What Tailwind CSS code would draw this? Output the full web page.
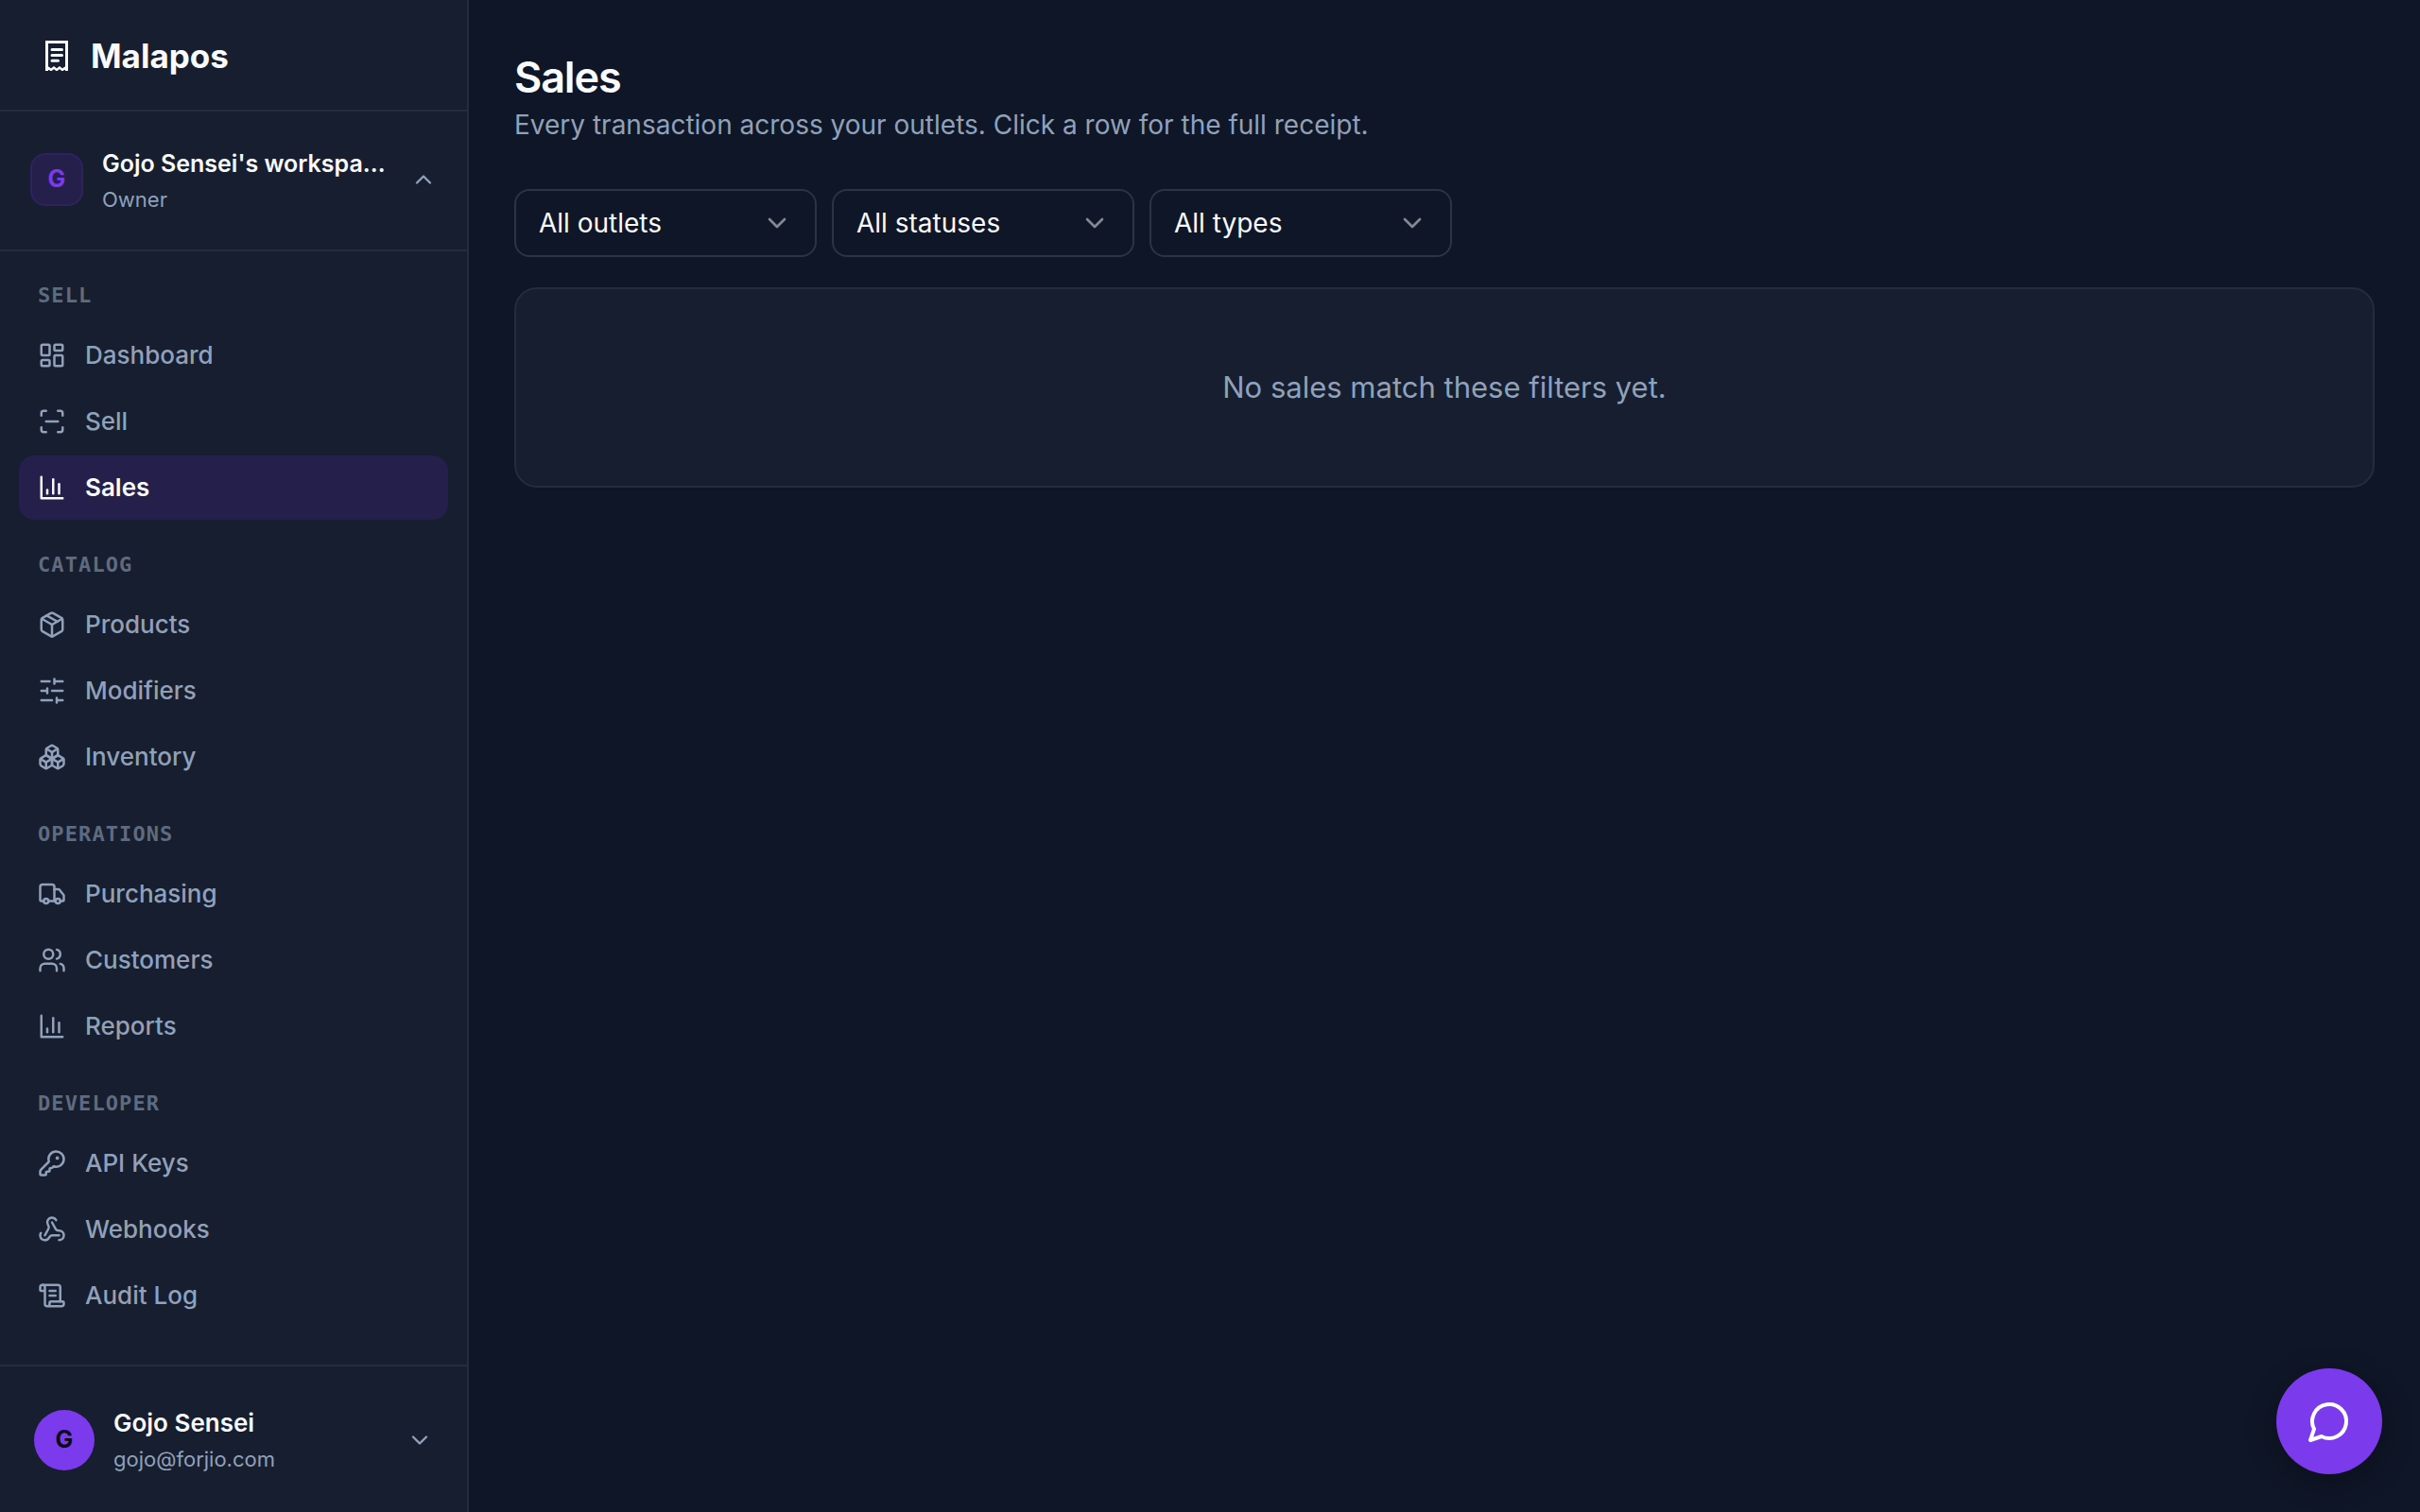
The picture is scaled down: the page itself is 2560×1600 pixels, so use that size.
<!DOCTYPE html>
<html lang="en">
<head>
    <meta charset="UTF-8">
    <meta name="viewport" content="width=device-width, initial-scale=1.0">
    <title>Sales - Malapos</title>
    <script src="https://cdn.jsdelivr.net/npm/@tailwindcss/browser@4"></script>
</head>
<body class="bg-[#0f1627] text-slate-50 font-['Inter','Liberation_Sans',sans-serif]">
    <div class="flex min-h-screen">

        <!-- Sidebar -->
        <aside class="flex flex-col w-[496px] h-screen sticky top-0 shrink-0 bg-[#161e30] border-r-2 border-[#232d3c]">
            <a href="#" class="flex items-center gap-6 h-[118px] shrink-0 pl-12 pt-0.5 border-b-2 border-[#232d3c]">
                <svg class="w-6 h-8" viewBox="0 0 24 32" fill="none" stroke="currentColor" stroke-width="3">
                    <path d="M1.5 32V1.5h21V32"/>
                    <path d="M1.5 30.5l2-1.5 2.5 2 3-2.5 3 2.5 3-2.5 3 2.5 2.5-2 2 1.5" stroke-width="2.4"/>
                    <path d="M7 9.5h10.500M7 15.500h10.500M7 21.200h6.500" stroke-linecap="round"/>
                </svg>
                <span class="text-[35px] leading-[44px] font-bold">Malapos</span>
            </a>

            <button type="button" title="Gojo Sensei's workspace" class="flex items-center gap-5 h-[148px] shrink-0 px-8 pb-0.5 text-left border-b-2 border-[#232d3c]">
                <span class="flex items-center justify-center w-14 h-14 shrink-0 rounded-2xl bg-[#24204b] border-2 border-[#2e225f] text-[#7c3aed] text-[25px] font-bold">G</span>
                <span class="flex-1 min-w-0 pt-0.5">
                    <span class="block truncate text-[25px] leading-10 font-semibold">Gojo Sensei's workspa…</span>
                    <span class="block text-[22px] leading-9 text-slate-400">Owner</span>
                </span>
                <svg class="w-7 h-7 shrink-0 text-slate-400" viewBox="0 0 24 24" fill="none" stroke="currentColor" stroke-width="2" stroke-linecap="round" stroke-linejoin="round"><path d="m18 15-6-6-6 6"/></svg>
            </button>

            <nav class="flex flex-col gap-[25px] flex-1 min-h-0 overflow-hidden px-5 pt-6 text-[26px] leading-8 font-medium text-slate-400">
                <div>
                    <h2 class="px-5 pt-3 pb-[18px] text-[22px] leading-[22px] font-bold tracking-wider text-[#5f6b7e] font-['DejaVu_Sans_Mono',monospace]">SELL</h2>
                    <div class="flex flex-col gap-0.5">
                        <a href="#" class="flex items-center gap-5 h-[68px] px-5 rounded-2xl">
                            <svg class="w-[30px] h-[30px]" viewBox="0 0 24 24" fill="none" stroke="currentColor" stroke-width="2" stroke-linecap="round" stroke-linejoin="round"><rect width="7" height="9" x="3" y="3" rx="1"/><rect width="7" height="5" x="14" y="3" rx="1"/><rect width="7" height="9" x="14" y="12" rx="1"/><rect width="7" height="5" x="3" y="16" rx="1"/></svg>
                            Dashboard
                        </a>
                        <a href="#" class="flex items-center gap-5 h-[68px] px-5 rounded-2xl">
                            <svg class="w-[30px] h-[30px]" viewBox="0 0 24 24" fill="none" stroke="currentColor" stroke-width="2" stroke-linecap="round" stroke-linejoin="round"><path d="M3 7V5a2 2 0 0 1 2-2h2"/><path d="M17 3h2a2 2 0 0 1 2 2v2"/><path d="M21 17v2a2 2 0 0 1-2 2h-2"/><path d="M7 21H5a2 2 0 0 1-2-2v-2"/><path d="M7 12h10"/></svg>
                            Sell
                        </a>
                        <a href="#" aria-current="page" class="flex items-center gap-5 h-[68px] px-5 rounded-2xl bg-[#24204b] text-slate-50 font-semibold">
                            <svg class="w-[30px] h-[30px]" viewBox="0 0 24 24" fill="none" stroke="currentColor" stroke-width="2" stroke-linecap="round" stroke-linejoin="round"><path d="M3 3v18h18"/><path d="M18 17V9"/><path d="M13 17V5"/><path d="M8 17v-3"/></svg>
                            Sales
                        </a>
                    </div>
                </div>

                <div>
                    <h2 class="px-5 pt-3 pb-[18px] text-[22px] leading-[22px] font-bold tracking-wider text-[#5f6b7e] font-['DejaVu_Sans_Mono',monospace]">CATALOG</h2>
                    <div class="flex flex-col gap-0.5">
                        <a href="#" class="flex items-center gap-5 h-[68px] px-5 rounded-2xl">
                            <svg class="w-[30px] h-[30px]" viewBox="0 0 24 24" fill="none" stroke="currentColor" stroke-width="2" stroke-linecap="round" stroke-linejoin="round"><path d="m7.5 4.27 9 5.15"/><path d="M21 8a2 2 0 0 0-1-1.730l-7-4a2 2 0 0 0-2 0l-7 4A2 2 0 0 0 3 8v8a2 2 0 0 0 1 1.730l7 4a2 2 0 0 0 2 0l7-4A2 2 0 0 0 21 16Z"/><path d="m3.300 7 8.700 5 8.700-5"/><path d="M12 22V12"/></svg>
                            Products
                        </a>
                        <a href="#" class="flex items-center gap-5 h-[68px] px-5 rounded-2xl">
                            <svg class="w-[30px] h-[30px]" viewBox="0 0 24 24" fill="none" stroke="currentColor" stroke-width="2" stroke-linecap="round" stroke-linejoin="round"><path d="M21 4h-7M10 4H3M21 12h-9M8 12H3M21 20h-5M12 20H3M14 2v4M8 10v4M16 18v4"/></svg>
                            Modifiers
                        </a>
                        <a href="#" class="flex items-center gap-5 h-[68px] px-5 rounded-2xl">
                            <svg class="w-[30px] h-[30px]" viewBox="0 0 24 24" fill="none" stroke="currentColor" stroke-width="2" stroke-linecap="round" stroke-linejoin="round"><path d="M2.970 12.920A2 2 0 0 0 2 14.630v3.240a2 2 0 0 0 .970 1.710l3 1.800a2 2 0 0 0 2.060 0L12 19v-5.500l-5-3-4.030 2.420Z"/><path d="m7 16.500-4.740-2.850"/><path d="m7 16.500 5-3"/><path d="M7 16.500v5.170"/><path d="M12 13.500V19l3.970 2.380a2 2 0 0 0 2.060 0l3-1.800a2 2 0 0 0 .970-1.710v-3.240a2 2 0 0 0-.970-1.710L17 10.500l-5 3Z"/><path d="m17 16.500-5-3"/><path d="m17 16.500 4.740-2.850"/><path d="M17 16.500v5.170"/><path d="M7.970 4.420A2 2 0 0 0 7 6.130v4.370l5 3 5-3V6.130a2 2 0 0 0-.970-1.710l-3-1.800a2 2 0 0 0-2.060 0l-3 1.800Z"/><path d="M12 8 7.260 5.150"/><path d="m12 8 4.740-2.850"/><path d="M12 13.500V8"/></svg>
                            Inventory
                        </a>
                    </div>
                </div>

                <div>
                    <h2 class="px-5 pt-3 pb-[18px] text-[22px] leading-[22px] font-bold tracking-wider text-[#5f6b7e] font-['DejaVu_Sans_Mono',monospace]">OPERATIONS</h2>
                    <div class="flex flex-col gap-0.5">
                        <a href="#" class="flex items-center gap-5 h-[68px] px-5 rounded-2xl">
                            <svg class="w-[30px] h-[30px]" viewBox="0 0 24 24" fill="none" stroke="currentColor" stroke-width="2" stroke-linecap="round" stroke-linejoin="round"><path d="M14 18V6a2 2 0 0 0-2-2H4a2 2 0 0 0-2 2v11a1 1 0 0 0 1 1h2"/><path d="M15 18H9"/><path d="M19 18h2a1 1 0 0 0 1-1v-3.650a1 1 0 0 0-.220-.624l-3.480-4.350A1 1 0 0 0 17.520 8H14"/><circle cx="17" cy="18" r="2"/><circle cx="7" cy="18" r="2"/></svg>
                            Purchasing
                        </a>
                        <a href="#" class="flex items-center gap-5 h-[68px] px-5 rounded-2xl">
                            <svg class="w-[30px] h-[30px]" viewBox="0 0 24 24" fill="none" stroke="currentColor" stroke-width="2" stroke-linecap="round" stroke-linejoin="round"><path d="M16 21v-2a4 4 0 0 0-4-4H6a4 4 0 0 0-4 4v2"/><circle cx="9" cy="7" r="4"/><path d="M22 21v-2a4 4 0 0 0-3-3.870"/><path d="M16 3.130a4 4 0 0 1 0 7.750"/></svg>
                            Customers
                        </a>
                        <a href="#" class="flex items-center gap-5 h-[68px] px-5 rounded-2xl">
                            <svg class="w-[30px] h-[30px]" viewBox="0 0 24 24" fill="none" stroke="currentColor" stroke-width="2" stroke-linecap="round" stroke-linejoin="round"><path d="M3 3v18h18"/><path d="M18 17V9"/><path d="M13 17V5"/><path d="M8 17v-3"/></svg>
                            Reports
                        </a>
                    </div>
                </div>

                <div>
                    <h2 class="px-5 pt-3 pb-[18px] text-[22px] leading-[22px] font-bold tracking-wider text-[#5f6b7e] font-['DejaVu_Sans_Mono',monospace]">DEVELOPER</h2>
                    <div class="flex flex-col gap-0.5">
                        <a href="#" class="flex items-center gap-5 h-[68px] px-5 rounded-2xl">
                            <svg class="w-[30px] h-[30px]" viewBox="0 0 24 24" fill="none" stroke="currentColor" stroke-width="2" stroke-linecap="round" stroke-linejoin="round"><path d="M2.586 17.414A2 2 0 0 0 2 18.828V21a1 1 0 0 0 1 1h3a1 1 0 0 0 1-1v-1a1 1 0 0 1 1-1h1a1 1 0 0 0 1-1v-1a1 1 0 0 1 1-1h.172a2 2 0 0 0 1.414-.586l.814-.814a6.500 6.500 0 1 0-4-4z"/><circle cx="16.500" cy="7.500" r=".5" fill="currentColor"/></svg>
                            API Keys
                        </a>
                        <a href="#" class="flex items-center gap-5 h-[68px] px-5 rounded-2xl">
                            <svg class="w-[30px] h-[30px]" viewBox="0 0 24 24" fill="none" stroke="currentColor" stroke-width="2" stroke-linecap="round" stroke-linejoin="round"><path d="M18 16.980h-5.990c-1.100 0-1.950.940-2.480 1.900A4 4 0 0 1 2 17c.010-.700.200-1.400.570-2"/><path d="m6 17 3.130-5.780c.530-.970.100-2.180-.500-3.100a4 4 0 1 1 6.890-4.060"/><path d="m12 6 3.130 5.730C15.660 12.700 16.900 13 18 13a4 4 0 0 1 0 8"/></svg>
                            Webhooks
                        </a>
                        <a href="#" class="flex items-center gap-5 h-[68px] px-5 rounded-2xl">
                            <svg class="w-[30px] h-[30px]" viewBox="0 0 24 24" fill="none" stroke="currentColor" stroke-width="2" stroke-linecap="round" stroke-linejoin="round"><path d="M15 12h-5"/><path d="M15 8h-5"/><path d="M19 17V5a2 2 0 0 0-2-2H4"/><path d="M8 21h12a2 2 0 0 0 2-2v-1a1 1 0 0 0-1-1H11a1 1 0 0 0-1 1v1a2 2 0 1 1-4 0V5a2 2 0 1 0-4 0v2a1 1 0 0 0 1 1h3"/></svg>
                            Audit Log
                        </a>
                    </div>
                </div>
            </nav>

            <button type="button" class="flex items-center gap-5 h-[156px] shrink-0 px-9 pt-0.5 text-left border-t-2 border-[#232d3c]">
                <span class="flex items-center justify-center w-16 h-16 shrink-0 rounded-full bg-[#7c3aed] text-[#0a0a14] text-[25px] font-bold">G</span>
                <span class="flex-1 min-w-0">
                    <span class="block truncate text-[26px] leading-10 font-semibold">Gojo Sensei</span>
                    <span class="block truncate text-[22px] leading-9 text-slate-400">gojo@forjio.com</span>
                </span>
                <svg class="w-7 h-7 shrink-0 text-slate-400" viewBox="0 0 24 24" fill="none" stroke="currentColor" stroke-width="2" stroke-linecap="round" stroke-linejoin="round"><path d="m6 9 6 6 6-6"/></svg>
            </button>
        </aside>

        <!-- Content -->
        <main class="flex-1 min-w-0 px-12 pt-[52px]">
            <h1 class="text-[45px] leading-[60px] font-semibold tracking-tight">Sales</h1>
            <p class="text-[28px] leading-10 text-slate-400">Every transaction across your outlets. Click a row for the full receipt.</p>

            <div class="flex flex-wrap gap-4 mt-12">
                <div class="relative w-80">
                    <select aria-label="Outlet" class="appearance-none w-full h-[72px] pl-6 pr-16 rounded-2xl border-2 border-[#2a3444] bg-[#0f1627] text-[28px]">
                        <option>All outlets</option>
                    </select>
                    <svg class="absolute right-[26px] top-5 w-8 h-8 text-slate-50/50 pointer-events-none" viewBox="0 0 24 24" fill="none" stroke="currentColor" stroke-width="2" stroke-linecap="round" stroke-linejoin="round"><path d="m6 9 6 6 6-6"/></svg>
                </div>
                <div class="relative w-80">
                    <select aria-label="Status" class="appearance-none w-full h-[72px] pl-6 pr-16 rounded-2xl border-2 border-[#2a3444] bg-[#0f1627] text-[28px]">
                        <option>All statuses</option>
                    </select>
                    <svg class="absolute right-[26px] top-5 w-8 h-8 text-slate-50/50 pointer-events-none" viewBox="0 0 24 24" fill="none" stroke="currentColor" stroke-width="2" stroke-linecap="round" stroke-linejoin="round"><path d="m6 9 6 6 6-6"/></svg>
                </div>
                <div class="relative w-80">
                    <select aria-label="Type" class="appearance-none w-full h-[72px] pl-6 pr-16 rounded-2xl border-2 border-[#2a3444] bg-[#0f1627] text-[28px]">
                        <option>All types</option>
                    </select>
                    <svg class="absolute right-[26px] top-5 w-8 h-8 text-slate-50/50 pointer-events-none" viewBox="0 0 24 24" fill="none" stroke="currentColor" stroke-width="2" stroke-linecap="round" stroke-linejoin="round"><path d="m6 9 6 6 6-6"/></svg>
                </div>
            </div>

            <div class="mt-8 py-20 rounded-3xl border-2 border-[#232d3c] bg-[#161e30] text-center text-[31px] leading-[48px] text-slate-400">
                No sales match these filters yet.
            </div>
        </main>
    </div>

    <button type="button" aria-label="Open chat" class="fixed right-10 bottom-10 flex items-center justify-center w-28 h-28 rounded-full bg-[#7c3aed] text-white shadow-[0_8px_32px_rgba(0,0,0,0.3)]">
        <svg class="w-12 h-12" viewBox="0 0 24 24" fill="none" stroke="currentColor" stroke-width="2" stroke-linecap="round" stroke-linejoin="round"><path d="M7.900 20A9 9 0 1 0 4 16.100L2 22Z"/></svg>
    </button>
</body>
</html>
